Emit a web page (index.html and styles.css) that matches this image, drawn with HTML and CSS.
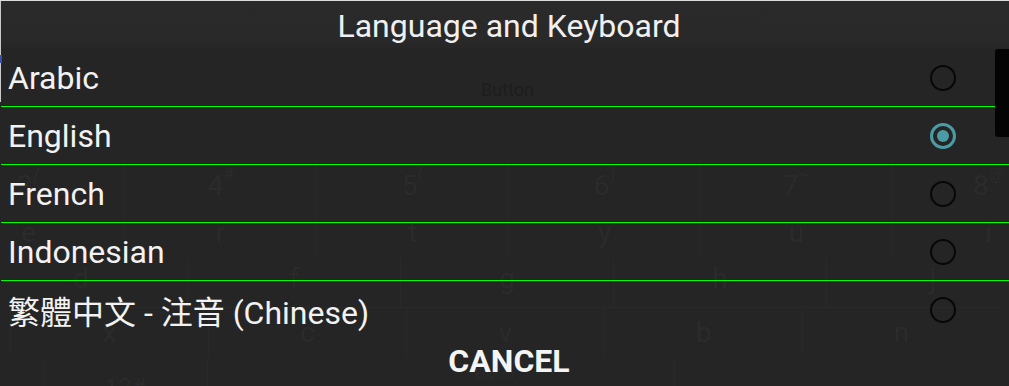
FILE: index.html
```html
<!DOCTYPE html>
<html lang="en">
<head>
    <meta charset="UTF-8">
    <title>Language and Keyboard</title>
    <link rel="stylesheet" href="styles.css">
</head>
<body>
    <div class="screen">
        <!-- pagina de fondo, casi invisible bajo el dialogo -->
        <div class="backdrop">
            <div class="page-area">
                <span class="page-button">Button</span>
            </div>
            <div class="keyboard">
                <div class="key-row row-num">
                    <div class="key">3<sup>/</sup></div>
                    <div class="key">4<sup>#</sup></div>
                    <div class="key">5<sup>(</sup></div>
                    <div class="key">6<sup>)</sup></div>
                    <div class="key">7<sup>~</sup></div>
                    <div class="key">8<sup>@</sup></div>
                </div>
                <div class="key-row row-top">
                    <div class="key">e</div>
                    <div class="key">r</div>
                    <div class="key">t</div>
                    <div class="key">y</div>
                    <div class="key">u</div>
                    <div class="key">i</div>
                </div>
                <div class="key-row row-mid">
                    <div class="key">d</div>
                    <div class="key">f</div>
                    <div class="key">g</div>
                    <div class="key">h</div>
                    <div class="key">j</div>
                </div>
                <div class="key-row row-low">
                    <div class="key">x</div>
                    <div class="key">c</div>
                    <div class="key">v</div>
                    <div class="key">b</div>
                    <div class="key">n</div>
                </div>
                <div class="key-row row-bottom">
                    <div class="key">12#</div>
                    <div class="key key-space">English</div>
                </div>
            </div>
        </div>

        <div class="dialog">
            <div class="dialog-title">Language and Keyboard</div>
            <ul class="lang-list">
                <li class="lang-row">
                    <span class="lang-name">Arabic</span>
                    <span class="radio"></span>
                </li>
                <li class="lang-row">
                    <span class="lang-name">English</span>
                    <span class="radio checked"></span>
                </li>
                <li class="lang-row">
                    <span class="lang-name">French</span>
                    <span class="radio"></span>
                </li>
                <li class="lang-row">
                    <span class="lang-name">Indonesian</span>
                    <span class="radio"></span>
                </li>
                <li class="lang-row last">
                    <span class="lang-name">繁體中文 - 注音 (Chinese)</span>
                    <span class="radio"></span>
                </li>
            </ul>
            <div class="dialog-actions">
                <button class="cancel-button">CANCEL</button>
            </div>
        </div>

        <div class="scroll-thumb"></div>
        <div class="edge-strip"><span class="edge-mark"></span></div>
    </div>
</body>
</html>
```

FILE: styles.css
```css
body {
    margin: 0;
    padding: 0;
    background-color: #252525;
    font-family: 'Roboto', 'Noto Sans CJK TC', sans-serif;
    overflow: hidden;
}

.screen {
    position: relative;
    width: 1009px;
    height: 386px;
    border-top: 1px solid #dcdcdc;
    box-sizing: border-box;
    overflow: hidden;
    background-color: #252525;
}

/* fondo */
.backdrop {
    display: flex;
    flex-direction: column;
}

.page-area {
    flex: none;
    height: 159px;
    display: flex;
    justify-content: center;
    padding-top: 78px;
    box-sizing: border-box;
}

.page-button {
    font-size: 18px;
    color: #1d1d1d;
    margin-left: 6px;
}

.keyboard {
    flex: none;
    display: flex;
    flex-direction: column;
}

.key-row {
    flex: none;
    display: flex;
}

.key {
    flex: none;
    display: flex;
    justify-content: center;
    align-items: center;
    box-sizing: border-box;
    border-right: 1px solid rgba(255,255,255,0.02);
    color: rgba(255,255,255,0.04);
    font-size: 28px;
}

.key sup {
    font-size: 17px;
    align-self: flex-start;
    margin-top: 4px;
}

.row-num { height: 50px; margin-left: -67px; }
.row-num .key { width: 192px; }

.row-top { height: 48px; margin-left: -67px; }
.row-top .key { width: 192px; padding-bottom: 4px; }

.row-mid { height: 49px; margin-left: -25px; }
.row-mid .key { width: 213px; padding-bottom: 8px; }

.row-low { height: 50px; margin-left: 10px; }
.row-low .key {
    width: 198px;
    border-left: 1px solid rgba(255,255,255,0.02);
    border-top: 1px solid rgba(255,255,255,0.02);
    border-right: none;
}

.row-bottom { height: 52px; margin-left: 43px; }
.row-bottom .key {
    width: 165px;
    border-left: 1px solid rgba(255,255,255,0.02);
    align-items: flex-start;
    padding-top: 16px;
    font-size: 24px;
}

.row-bottom .key-space {
    width: 360px;
    margin-left: 107px;
    font-size: 12px;
    padding-top: 10px;
    border-left: none;
}

/* dialogo */
.dialog {
    position: absolute;
    top: 0;
    left: 1px;
    right: 0;
    bottom: 0;
    display: flex;
    flex-direction: column;
}

.dialog-title {
    height: 48px;
    background: linear-gradient(#2a2a2a, #292929 80%, #262626);
    color: #f0f0f0;
    font-size: 32px;
    text-align: center;
    line-height: 50px;
    padding-left: 8px;
    flex: none;
}

.lang-list {
    list-style: none;
    margin: 0;
    padding: 0;
}

.lang-row {
    height: 57px;
    border-bottom: 1px solid #00ff00;
    display: flex;
    align-items: center;
    justify-content: space-between;
    padding: 0 53px 0 7px;
}

.lang-row.last {
    border-bottom: none;
}

.lang-name {
    color: #f2f2f2;
    font-size: 32px;
}

.radio {
    width: 26px;
    height: 26px;
    box-sizing: border-box;
    border: 2.5px solid #070707;
    border-radius: 50%;
    display: flex;
    justify-content: center;
    align-items: center;
}

.radio.checked {
    border: 3px solid #4a9ba5;
}

.radio.checked::after {
    content: '';
    width: 12px;
    height: 12px;
    border-radius: 50%;
    background-color: #4a9ba5;
}

.dialog-actions {
    display: flex;
    justify-content: center;
    padding-top: 4px;
    padding-left: 8px;
}

.cancel-button {
    background: none;
    border: none;
    color: #f4f4f4;
    font-family: 'Roboto', sans-serif;
    font-weight: bold;
    font-size: 32px;
    padding: 0;
    cursor: pointer;
}

/* barra negra a la derecha */
.scroll-thumb {
    position: absolute;
    top: 48px;
    right: 0;
    width: 14px;
    height: 88px;
    background-color: #040404;
    border-radius: 3px 0 0 3px;
}

.edge-strip {
    position: absolute;
    top: 0;
    left: 0;
    width: 1px;
    height: 101px;
    background-color: #c9c9c9;
}

.edge-mark {
    position: absolute;
    top: 54px;
    left: 0;
    width: 2px;
    height: 8px;
    background-color: #3b4fa8;
}
```
